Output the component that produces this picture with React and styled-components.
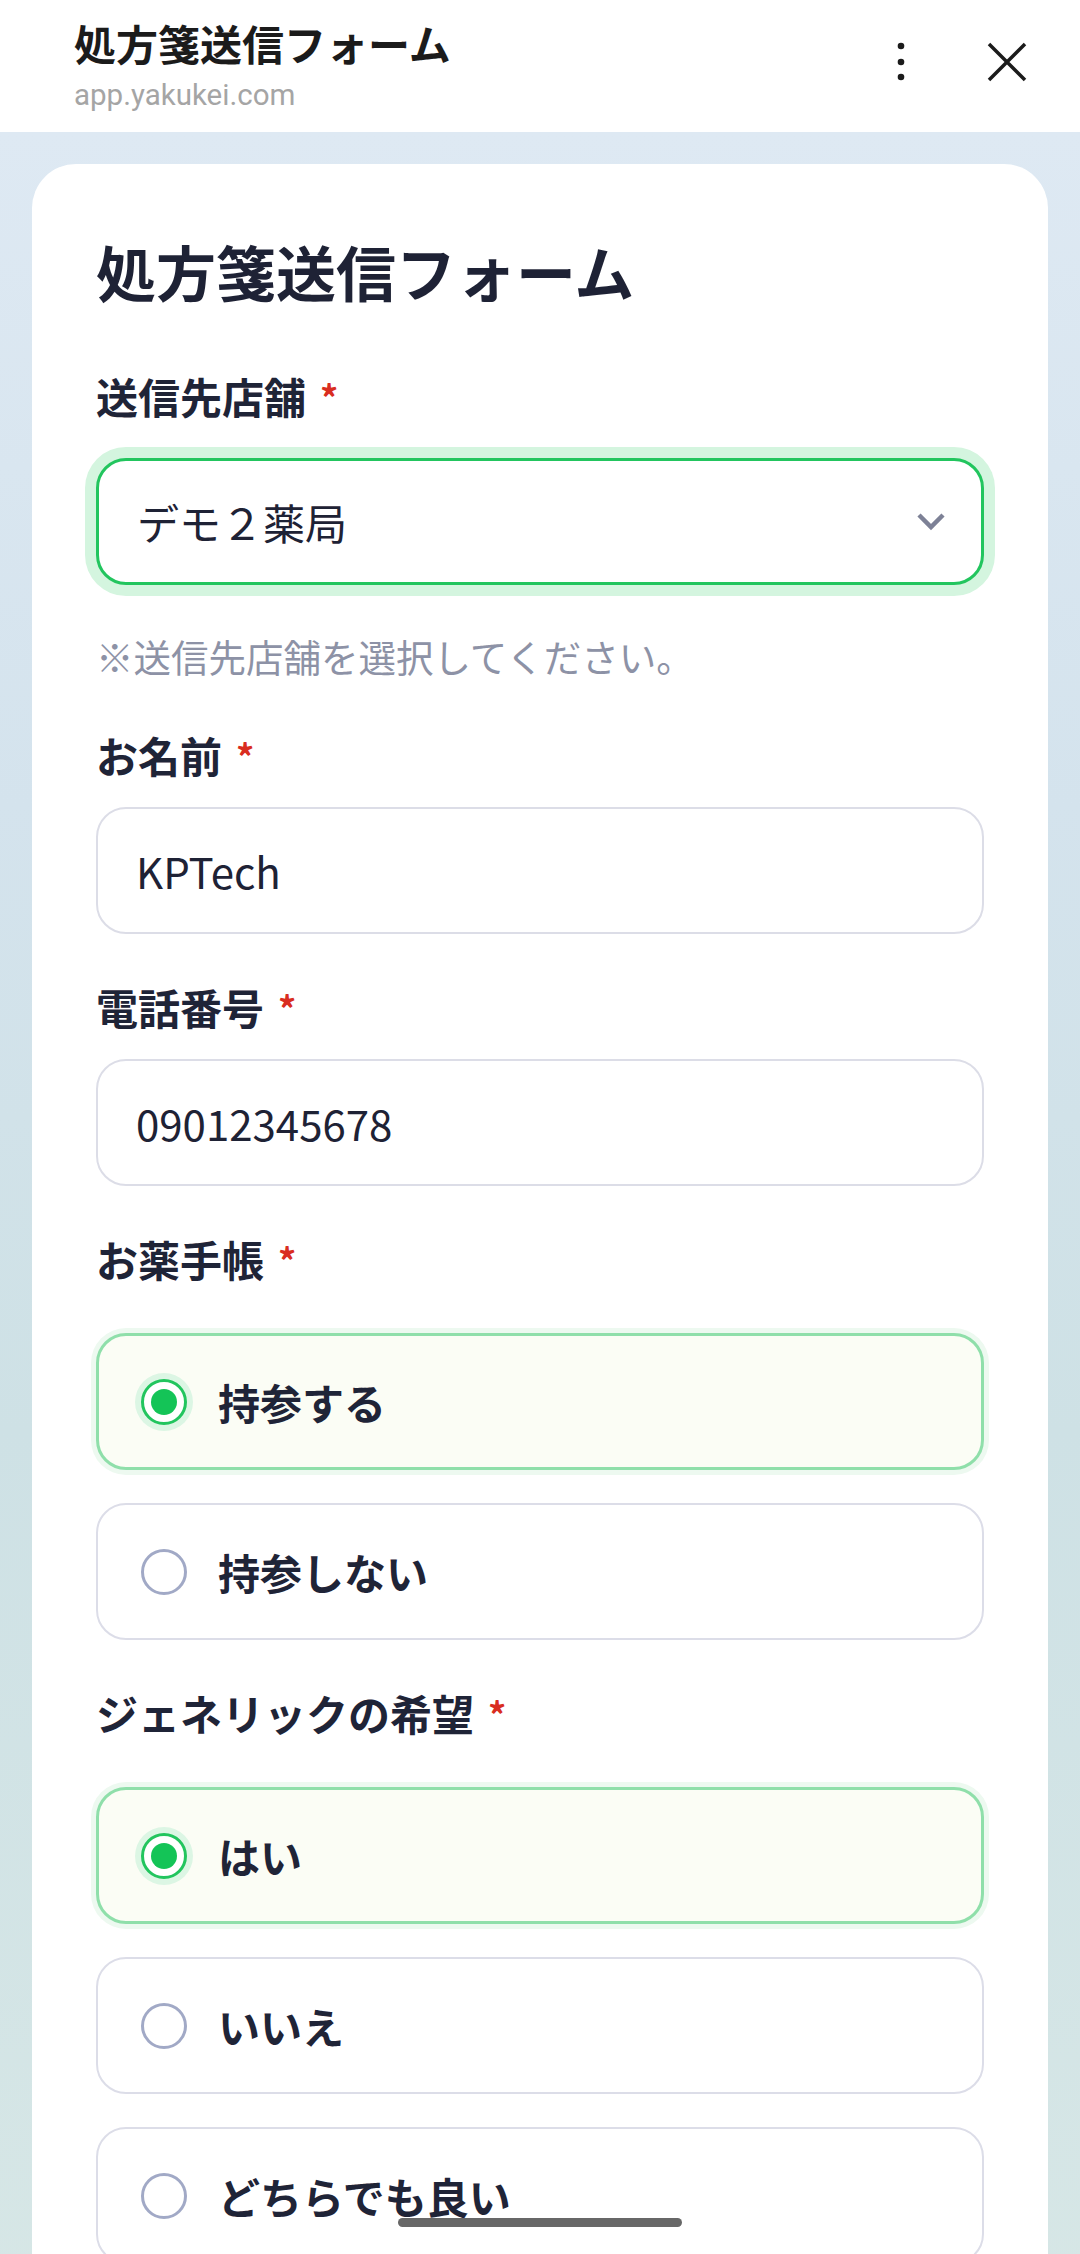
import React, { useState } from "react";
import styled, { createGlobalStyle } from "styled-components";

const GlobalStyle = createGlobalStyle`
  html, body {
    margin: 0;
    padding: 0;
    background: #ffffff;
  }
  body {
    font-family: "Noto Sans CJK JP", "Noto Sans", sans-serif;
    color: #1e2235;
  }
  * {
    box-sizing: border-box;
  }
`;

const HeaderBar = styled.header`
  display: flex;
  align-items: flex-start;
  height: 132px;
  padding: 17px 53px 0 74px;
  background: #ffffff;
`;

const HeaderText = styled.div`
  flex: 1;
  display: flex;
  flex-direction: column;
`;

const HeaderTitle = styled.div`
  font-size: 42px;
  font-weight: 700;
  line-height: 52px;
  color: #1b1b1b;
`;

const HeaderUrl = styled.div`
  margin-top: 8px;
  font-family: Roboto, "Liberation Sans", sans-serif;
  font-size: 29.5px;
  line-height: 36px;
  color: #a5a5a5;
`;

const IconGroup = styled.div`
  display: flex;
  align-items: center;
  gap: 80px;
  margin-top: 25px;
  height: 40px;
`;

const Page = styled.main`
  padding: 32px 32px 0;
  background: linear-gradient(
    180deg,
    #dee9f3 0%,
    #d4e3ed 30%,
    #cee1e5 58%,
    #d7e7e6 100%
  );
`;

const Card = styled.section`
  background: #ffffff;
  border-radius: 44px 44px 0 0;
  padding: 66px 64px 64px;
`;

const Title = styled.h1`
  margin: 0 0 55px;
  font-size: 60px;
  font-weight: 700;
  line-height: 81px;
  color: #1e2235;
`;

const Field = styled.div`
  margin-bottom: 43px;
`;

const Label = styled.div`
  font-size: 42px;
  font-weight: 700;
  line-height: 60px;
  color: #1f2437;
  margin-bottom: ${(p) => p.$gap}px;
`;

const Required = styled.span`
  margin-left: 14px;
  font-size: 36px;
  color: #d92d20;
  vertical-align: top;
  line-height: 60px;
`;

const SelectBox = styled.div`
  display: flex;
  align-items: center;
  justify-content: space-between;
  height: 127px;
  padding: 0 35px 0 38px;
  border: 3px solid #22c55e;
  border-radius: 30px;
  box-shadow: 0 0 0 11px #d4f5df;
  font-size: 42px;
  color: #1e2235;
  background: #ffffff;
`;

const Hint = styled.div`
  margin-top: 45px;
  font-size: 37.5px;
  line-height: 52px;
  color: #8d92a6;
`;

const TextInput = styled.input`
  display: block;
  width: 100%;
  height: 127px;
  padding: 0 38px;
  border: 2px solid #dcdde7;
  border-radius: 30px;
  background: #ffffff;
  font-family: "Noto Sans CJK JP", "Noto Sans", sans-serif;
  font-size: 42px;
  color: #1e2235;
  outline: none;
`;

const OptionList = styled.div`
  display: flex;
  flex-direction: column;
  gap: 33px;
`;

const Option = styled.label`
  display: flex;
  align-items: center;
  gap: 31px;
  height: 137px;
  padding-left: ${(p) => (p.$checked ? "42px" : "43px")};
  border-radius: 30px;
  border: ${(p) => (p.$checked ? "3px solid #8fdfaa" : "2px solid #dcdde8")};
  background: ${(p) => (p.$checked ? "#fbfdf5" : "#ffffff")};
  box-shadow: ${(p) => (p.$checked ? "0 0 0 5px #edf9f0" : "none")};
  font-size: 42px;
  font-weight: 700;
  color: #1f2437;
  cursor: pointer;
`;

const RadioCircle = styled.span`
  flex: none;
  display: flex;
  align-items: center;
  justify-content: center;
  width: 46px;
  height: 46px;
  border-radius: 50%;
  border: 3px solid ${(p) => (p.$checked ? "#22c55e" : "#a1a9c6")};
  background: #ffffff;
  box-shadow: ${(p) => (p.$checked ? "0 0 0 6px #dcf6e4" : "none")};

  &::after {
    content: "";
    display: ${(p) => (p.$checked ? "block" : "none")};
    width: 26px;
    height: 26px;
    border-radius: 50%;
    background: #14c457;
  }
`;

const HomeIndicator = styled.div`
  position: fixed;
  left: 50%;
  bottom: 27px;
  width: 284px;
  height: 9px;
  margin-left: -142px;
  border-radius: 5px;
  background: #676767;
`;

const DotsIcon = () => (
  <svg width="12" height="40" viewBox="0 0 12 40">
    <circle cx="6" cy="4" r="3.3" fill="#1b1b1b" />
    <circle cx="6" cy="20" r="3.3" fill="#1b1b1b" />
    <circle cx="6" cy="35" r="3.3" fill="#1b1b1b" />
  </svg>
);

const CloseIcon = () => (
  <svg width="40" height="40" viewBox="0 0 40 40">
    <path
      d="M2 2 L38 38 M38 2 L2 38"
      stroke="#1b1b1b"
      strokeWidth="3.5"
      fill="none"
    />
  </svg>
);

const Chevron = () => (
  <svg width="30" height="20" viewBox="0 0 30 20">
    <path
      d="M3 3 L15 15 L27 3"
      stroke="#7d8196"
      strokeWidth="4.5"
      fill="none"
      strokeLinejoin="miter"
    />
  </svg>
);

const RadioField = ({ label, options, value, onChange }) => (
  <Field>
    <Label $gap={44}>
      {label}
      <Required>*</Required>
    </Label>
    <OptionList>
      {options.map((opt, i) => (
        <Option key={opt} $checked={value === i} onClick={() => onChange(i)}>
          <RadioCircle $checked={value === i} />
          {opt}
        </Option>
      ))}
    </OptionList>
  </Field>
);

const App = () => {
  const [notebook, setNotebook] = useState(0);
  const [generic, setGeneric] = useState(0);

  return (
    <>
      <GlobalStyle />
      <HeaderBar>
        <HeaderText>
          <HeaderTitle>処方箋送信フォーム</HeaderTitle>
          <HeaderUrl>app.yakukei.com</HeaderUrl>
        </HeaderText>
        <IconGroup>
          <DotsIcon />
          <CloseIcon />
        </IconGroup>
      </HeaderBar>
      <Page>
        <Card>
          <Title>処方箋送信フォーム</Title>

          <Field>
            <Label $gap={32}>
              送信先店舗
              <Required>*</Required>
            </Label>
            <SelectBox>
              <span>デモ２薬局</span>
              <Chevron />
            </SelectBox>
            <Hint>※送信先店舗を選択してください。</Hint>
          </Field>

          <Field>
            <Label $gap={22}>
              お名前
              <Required>*</Required>
            </Label>
            <TextInput defaultValue="KPTech" />
          </Field>

          <Field>
            <Label $gap={22}>
              電話番号
              <Required>*</Required>
            </Label>
            <TextInput defaultValue="09012345678" />
          </Field>

          <RadioField
            label="お薬手帳"
            options={["持参する", "持参しない"]}
            value={notebook}
            onChange={setNotebook}
          />

          <RadioField
            label="ジェネリックの希望"
            options={["はい", "いいえ", "どちらでも良い"]}
            value={generic}
            onChange={setGeneric}
          />
        </Card>
      </Page>
      <HomeIndicator />
    </>
  );
};

export default App;
